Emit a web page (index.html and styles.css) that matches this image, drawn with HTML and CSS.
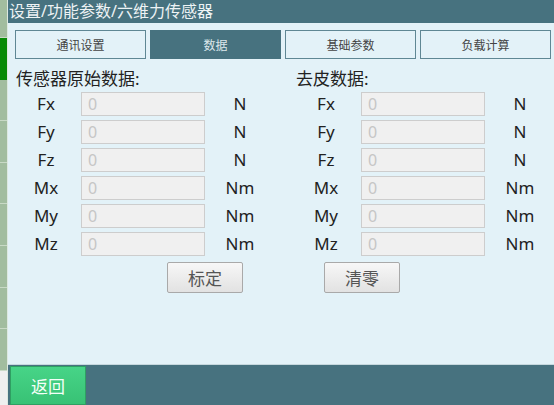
FILE: index.html
```html
<!DOCTYPE html>
<html lang="zh-CN">

<head>
    <meta charset="UTF-8">
    <meta name="viewport" content="width=device-width, initial-scale=1.0">
    <title>六维力传感器</title>
    <link rel="stylesheet" href="styles.css">
</head>

<body>
    <div class="app">
        <div class="side-strip">
            <div class="strip-item"></div>
            <div class="strip-item active"></div>
            <div class="strip-item"></div>
            <div class="strip-item"></div>
            <div class="strip-item"></div>
            <div class="strip-item"></div>
            <div class="strip-item"></div>
            <div class="strip-item"></div>
            <div class="strip-item"></div>
            <div class="strip-rest"></div>
        </div>

        <div class="main">
            <div class="title-bar">设置/功能参数/六维力传感器</div>

            <div class="content">
                <div class="tabs">
                    <div class="tab">通讯设置</div>
                    <div class="tab active">数据</div>
                    <div class="tab">基础参数</div>
                    <div class="tab">负载计算</div>
                </div>

                <div class="panels">
                    <div class="panel">
                        <div class="panel-title">传感器原始数据:</div>
                        <div class="rows">
                            <span class="label">Fx</span><input class="value" value="0" disabled><span class="unit">N</span>
                            <span class="label">Fy</span><input class="value" value="0" disabled><span class="unit">N</span>
                            <span class="label">Fz</span><input class="value" value="0" disabled><span class="unit">N</span>
                            <span class="label">Mx</span><input class="value" value="0" disabled><span class="unit">Nm</span>
                            <span class="label">My</span><input class="value" value="0" disabled><span class="unit">Nm</span>
                            <span class="label">Mz</span><input class="value" value="0" disabled><span class="unit">Nm</span>
                        </div>
                        <button class="action calibrate">标定</button>
                    </div>

                    <div class="panel">
                        <div class="panel-title">去皮数据:</div>
                        <div class="rows">
                            <span class="label">Fx</span><input class="value" value="0" disabled><span class="unit">N</span>
                            <span class="label">Fy</span><input class="value" value="0" disabled><span class="unit">N</span>
                            <span class="label">Fz</span><input class="value" value="0" disabled><span class="unit">N</span>
                            <span class="label">Mx</span><input class="value" value="0" disabled><span class="unit">Nm</span>
                            <span class="label">My</span><input class="value" value="0" disabled><span class="unit">Nm</span>
                            <span class="label">Mz</span><input class="value" value="0" disabled><span class="unit">Nm</span>
                        </div>
                        <button class="action zero">清零</button>
                    </div>
                </div>
            </div>

            <div class="footer">
                <button class="back">返回</button>
            </div>
        </div>
    </div>
</body>

</html>
```

FILE: styles.css
```css
* {
    box-sizing: border-box;
}

body {
    margin: 0;
    font-family: "Noto Sans", "Noto Sans CJK SC", sans-serif;
    background-color: #e3f2f8;
}

.app {
    display: flex;
    width: 554px;
    height: 405px;
    overflow: hidden;
}

/* left navigation strip */
.side-strip {
    width: 8px;
    display: flex;
    flex-direction: column;
    background-color: #eeeeee;
    border-right: 1px solid #dde8e0;
}

.strip-item {
    height: 41.6px;
    background-color: #a2bd9f;
    border-bottom: 1px solid #c9dac6;
}

.strip-item:first-child {
    height: 38px;
}

.strip-item.active {
    background-color: #078a07;
    border-bottom-color: #078a07;
}

.strip-rest {
    flex: 1;
    background-color: #efefef;
}

.main {
    flex: 1;
    display: flex;
    flex-direction: column;
    min-width: 0;
}

.title-bar {
    height: 23px;
    background-color: #47727f;
    color: #eef3f5;
    font-size: 16px;
    line-height: 23px;
    padding-left: 1px;
    white-space: nowrap;
}

.content {
    flex: 1;
    background-color: #e3f2f8;
    padding: 7px 3px 0 7px;
}

.tabs {
    display: grid;
    grid-template-columns: repeat(4, 131px);
    gap: 4px;
}

.tab {
    height: 29px;
    border: 1px solid #5f8794;
    background-color: #e3f2f8;
    color: #444;
    font-size: 12px;
    display: flex;
    align-items: center;
    justify-content: center;
}

.tab.active {
    background-color: #47727f;
    border-color: #47727f;
    color: #dde8ec;
}

.panels {
    display: flex;
    padding-left: 1px;
}

.panel {
    width: 280px;
    flex-shrink: 0;
}

.panel-title {
    margin-top: 9px;
    height: 22px;
    line-height: 22px;
    font-size: 17px;
    color: #222;
}

.rows {
    margin-top: 2px;
    display: grid;
    grid-template-columns: 60px 124px 60px;
    column-gap: 5px;
    row-gap: 4px;
    align-items: center;
}

.label,
.unit {
    text-align: center;
    font-size: 17px;
    color: #222;
    line-height: 24px;
}

.value {
    height: 24px;
    width: 124px;
    border: 1px solid #cdcdcd;
    background-color: #f0f0f0;
    color: #c6c6c6;
    font-family: "Noto Sans", sans-serif;
    font-size: 16px;
    padding: 0 6px;
    margin: 0;
}

.action {
    display: block;
    margin-top: 6px;
    width: 76px;
    height: 31px;
    border: 1px solid #a9a9a9;
    border-radius: 2px;
    background: linear-gradient(#f7f7f7, #e2e2e2);
    color: #555;
    font-family: "Noto Sans CJK SC", sans-serif;
    font-size: 17px;
    padding: 0;
}

.calibrate {
    margin-left: 151px;
}

.zero {
    margin-left: 28px;
}

.footer {
    height: 41px;
    background-color: #47727f;
    border-top: 1px solid #c6d8de;
    padding-left: 2px;
    padding-top: 1px;
}

.back {
    width: 76px;
    height: 39px;
    border: 1px solid #2f9f62;
    background: linear-gradient(#47d487, #38c275);
    color: #f4fff8;
    font-family: "Noto Sans CJK SC", sans-serif;
    font-size: 17px;
    padding: 0;
}
```
